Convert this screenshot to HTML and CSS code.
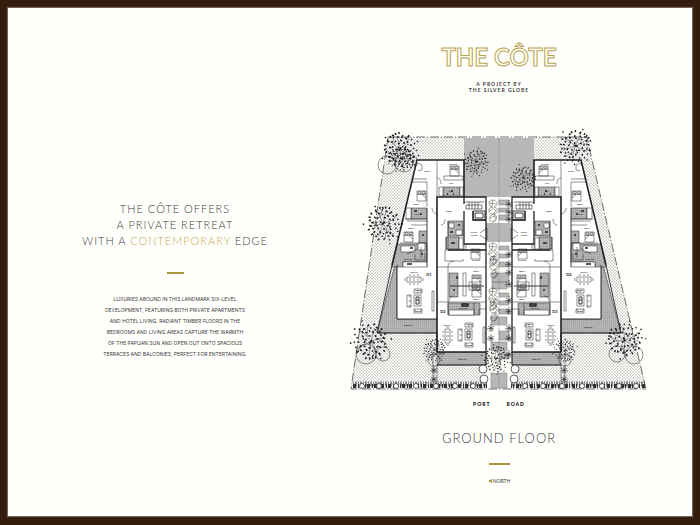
FILE: index.html
```html
<!DOCTYPE html>
<html lang="en">
<head>
<meta charset="utf-8">
<meta name="viewport" content="width=device-width, initial-scale=1">
<title>The Côte – Ground Floor</title>
<link rel="stylesheet" href="styles.css">
</head>
<body>
<main class="spread">
  <section class="intro">
    <h2 class="headline">The Côte offers<br>a private retreat<br>with a <span class="accent">contemporary</span> edge</h2>
    <div class="rule rule-small"></div>
    <p class="copy">Luxuries abound in this landmark six-level<br>development, featuring both private apartments<br>and hotel living. Radiant timber floors in the<br>bedrooms and living areas capture the warmth<br>of the Papuan sun and open out onto spacious<br>terraces and balconies, perfect for entertaining.</p>
  </section>
  <section class="floor">
    <h1 class="logo">THE CÔTE</h1>
    <p class="byline">A project by<br>the Silver Globe</p>
    <svg class="plan" viewBox="342 128 314 264" role="img" aria-label="Ground floor plan">
      <defs>
        <pattern id="grass" width="3" height="3" patternUnits="userSpaceOnUse"><path d="M0 0L3 3M3 0L0 3" stroke="#999" stroke-width=".35"/></pattern>
        <pattern id="deck" width="2" height="2" patternUnits="userSpaceOnUse"><rect width="2" height="2" fill="#c6c6c6"/><path d="M0 1H2" stroke="#999" stroke-width=".7"/></pattern>
        <pattern id="tile" width="2" height="2" patternUnits="userSpaceOnUse"><rect width="2" height="2" fill="#bbb"/><path d="M0 .5H2M.5 0V2" stroke="#999" stroke-width=".4"/></pattern>
        <g id="bed"><path d="M0 0H9V10H0ZM0 3.5H9M1 .8H4V2.6H1ZM5 .8H8V2.6H5ZM5 3.5L9 7"/></g>
        <g id="lounge">
          <path d="M7 0H15V4H7ZM8 1.5H14V4M11 1.5V4M0 6H4V18H0ZM1.500 7H4M1.500 12H4M1.500 17H4M7 6H14V17H7ZM7 20H15V24H7ZM8 20V22.500H14V20"/>
          <path d="M9 8H12V15H9ZM9 11H12" stroke-width=".9"/>
        </g>
        <g id="dining"><path d="M2 3H16V8H2ZM0 4V7M18 4V7M4 1H6M8 1H10M12 1H14M4 10H6M8 10H10M12 10H14M5 4V7M9 4V7M13 4V7"/></g>
        <g id="vine" stroke-width=".4"><path d="M5 0C0 0 0 5 4 7C-1 8 0 14 5 14C1 16 0 22 5 22C9 21 10 16 6 14C11 13 10 8 6 7C11 5 9 0 5 0M5 0L4 7L8 11L5 14L8 18L5 22M1 3L8 4M1 11L5 9M2 18L7 16"/></g>
        <g id="shrub"><path d="M0 0L-3 -2M0 0L3 -2M0 0L-4 1M0 0L3 1M0 0L-2 3M0 0L2 3M0 0V-4M0 0V4"/></g>
        <g id="leaves"><path d="M-16 -5l2 1M-14 3l1 -2M-13 -10l2 2M-12 7l2 0M-11 -3l2 1M-11 12l1 -2M-10 -14l1 2M-9 2l-2 2M-9 -8l2 0M-8 8l2 1M-7 -12l1 -1M-7 -4l-1 2M-6 4l2 0M-6 15l1 -2M-5 -17l1 2M-5 -9l1 1M-4 -1l2 1M-4 10l-1 2M-3 -13l2 0M-3 5l1 2M-2 -6l2 -1M-2 14l2 0M-1 -18l0 2M-1 1l1 -2M0 8l2 1M0 -10l2 1M1 -3l-1 2M2 4l2 0M2 17l1 -2M3 -15l-1 2M3 -7l2 0M4 11l1 1M4 0l2 -1M5 -12l2 1M6 -4l-1 2M6 6l2 0M7 -9l1 2M7 14l1 -2M8 1l2 1M9 -15l-1 2M9 9l2 -1M10 -5l2 0M10 4l1 2M11 -10l1 -1M12 12l1 -1M13 -2l1 1M13 6l2 1M14 -7l1 1M16 0l1 1M-14 -1l-2 1M-8 -15l2 1M-7 1l1 1M-10 6l0 2M1 -13l1 1M7 -1l1 1M5 8l-1 1M-1 11l1 1M-17 8l-1 1M17 -8l1 -1M-15 -13l1 1M14 15l1 0M18 5l1 1"/></g>
        <g id="tree">
          <path d="M0 0L-9 -8L-13 -8M0 0L8 -9V-14M0 0L-10 7M0 0L11 6L14 4M0 0L1 13M0 0L-3 -14M-5 -4L-7 -12M5 3L8 12M-5 4L-13 3" stroke-width=".4"/>
          <use href="#leaves" stroke-width="1.500"/>
        </g>
        <g id="half">
          <path d="M437 365H486V389H437Z" fill="url(#grass)" stroke="none"/>
          <path d="M397 265V319H437V333H377L395 265Z" fill="url(#tile)"/>
          <path d="M437 352H486V365H437Z" fill="url(#tile)"/>
          <path d="M417 160H464V197H486V352H437V319H397V265H392Z" fill="#fff" stroke="none"/>
          <g fill="url(#tile)">
            <path d="M443 187H460V196H443ZM411 208H427V219H411ZM419 231H427V243H419ZM448 221H463V236H448ZM446 237H459V249H446ZM449 273H458V297H449ZM448 303H480V315H448ZM397 244H427V262H403V267H392Z"/>
          </g>
          <g fill="#fff">
            <path d="M403 262H427V267H403ZM401 246H415V252H401ZM418 243H425V250H418ZM406 208H411V219H406ZM439 187H443V196H439ZM460 187H463V196H460ZM449 310H474V315H449ZM459 238H463V249H459ZM449 223H454V228H449ZM456 230H462V235H456Z"/>
          </g>
          <path d="M437 160V197M444 178V176H463V180H444ZM412 182H427V207M412 179H427M405 219H427V221H407M427 221V231M400 243H427V267M411 225H427M427 208V262M464 244V250H445V261H463V259M437 267H486M448 267V302M463 273H466V296H463ZM437 302H486M448 302V315M448 221V250M479 315V309H486M474 303V315M446 237V250M466 250V244M432 291H434V311H432ZM483 327H485V343H483ZM421 247V258M407 254L417 249M415 254V260H425V253"/>
          <path d="M415 167L418 163L422 165V170L418 171M437 178C440 178 441 181 441 184M432 208C432 212 435 214 438 214M441 225C444 225 445 222 445 219M448 267C448 263 451 261 454 261M449 302C449 297 451 296 454 296M480 233L487 228V240L480 235"/>
          <path d="M464 202H484M466 205H482V209H466ZM469 202V209M472 202V209M475 202V209M478 202V209" stroke-width=".6"/>
          <path d="M473 211H485V220H473ZM475 213H483V218H475ZM450 286H484" stroke-width=".9"/>
          <path d="M451 191h2M447 194h1M453 194h1M414 211h3M420 214h2M422 235h2M450 232h3M458 225h2M451 243h4M407 264h5M410 248h3M421 254h2M457 276v3M454 289v2M462 304h6v2h-6z" stroke-width="1.400"/>
          <use href="#bed" x="450" y="166"/><use href="#bed" x="417" y="191"/><use href="#bed" x="404" y="232"/>
          <use href="#bed" x="471" y="249"/><use href="#bed" x="472" y="275"/><use href="#bed" x="472" y="287"/>
          <path d="M469 282H480V290H469ZM472 284H477V288H472Z"/>
          <use href="#dining" x="405" y="274"/><use href="#lounge" x="407" y="289"/>
          <use href="#dining" transform="translate(453 327) rotate(90)"/><use href="#lounge" x="458" y="323"/>
          <path d="M437 352V197H464V160H417L392 265" fill="none" stroke-width="1.600"/>
          <path d="M464 197H486V352H437M464 197V204M464 211V244H486M473 211V220H486M448 250H486" fill="none" stroke-width="1.300"/>
          <path d="M397 265V319H437M392 265L377 333H437V352M437 365H486V352" fill="none" stroke-width=".9"/>
          <path d="M437 365V389M433 352V386" fill="none"/>
          <path d="M353 384H487" stroke-width="5" stroke-dasharray="1 1 2 1" stroke="#888"/>
          <path d="M353 386H487" stroke-width="4" stroke-dasharray="3 2 1 1" stroke="#333"/>
          <g fill="#fff" stroke-width=".7"><circle cx="362" cy="386" r="2.500"/><circle cx="379" cy="386" r="2.500"/><circle cx="396" cy="386" r="2.500"/><circle cx="416" cy="386" r="2.500"/><circle cx="436" cy="386" r="2.500"/><circle cx="455" cy="386" r="2.500"/><circle cx="473" cy="386" r="2.500"/><circle cx="483" cy="369" r="4"/><circle cx="484" cy="379" r="4"/></g>
          <g stroke-width=".6"><use href="#shrub" x="434" y="370"/><use href="#shrub" x="434" y="379"/></g>
        </g>
      </defs>

      <g class="ink">
        <path d="M388 137H464V197H437V389H351ZM534 137H587L592 160L646 389H561V197H534Z" fill="url(#grass)" stroke="none"/>
        <path d="M464 138H534V197H464ZM486 223H512V242H486Z" fill="url(#deck)" stroke="none"/>
        <use href="#half"/>
        <use href="#half" transform="translate(998 0) scale(-1 1)"/>

        <g class="paving" fill="url(#deck)">
          <path d="M499 200H509V205H499ZM499 208H509V212H499ZM499 215H509V220H499ZM499 246H509V250H499ZM499 254H509V258H499ZM499 262H509V267H499ZM492 273H509V282H492ZM492 282H507V289H492ZM499 293H509V297H499ZM499 301H509V305H499ZM499 309H509V314H499ZM491 317H507V325H491ZM499 331H509V340H499ZM491 342H507V351H491ZM499 353H509V359H499ZM491 373H507V388H491Z"/>
          <path d="M499 138V389" fill="none" stroke-dasharray="7 1 1 1"/>
        </g>
        <use href="#vine" x="488" y="200"/><use href="#vine" x="488" y="243"/><use href="#vine" x="489" y="256"/><use href="#vine" x="488" y="288"/><use href="#vine" x="489" y="299"/>
        <g stroke-width=".6">
          <use href="#shrub" x="509" y="204"/><use href="#shrub" x="509" y="212"/><use href="#shrub" x="509" y="219"/>
          <use href="#shrub" x="509" y="254"/><use href="#shrub" x="509" y="264"/><use href="#shrub" x="509" y="272"/><use href="#shrub" x="509" y="284"/>
          <use href="#shrub" x="509" y="300"/><use href="#shrub" x="509" y="311"/><use href="#shrub" x="509" y="328"/><use href="#shrub" x="509" y="338"/>
          <use href="#shrub" x="491" y="328"/><use href="#shrub" x="491" y="338"/><use href="#shrub" x="509" y="354"/>
        </g>

        <path class="boundary" d="M388 137H587L592 160L646 389M388 137L351 389H646"/>
        <g fill="none" stroke-width=".5">
          <circle cx="387" cy="165" r="9"/><circle cx="404" cy="163" r="9"/><circle cx="366" cy="354" r="10"/><circle cx="383" cy="354" r="7"/><circle cx="617" cy="354" r="8"/><circle cx="634" cy="355" r="9"/><circle cx="434" cy="360" r="6"/><circle cx="565" cy="360" r="6"/>
        </g>
        <use href="#tree" x="400" y="150"/>
        <use href="#tree" transform="translate(402 158) rotate(140) scale(.75)"/>
        <use href="#tree" transform="translate(383 224) rotate(25)"/>
        <use href="#tree" transform="translate(476 162) rotate(60) scale(.72)"/>
        <use href="#tree" transform="translate(523 178) rotate(100) scale(.72)"/>
        <use href="#tree" transform="translate(575 146) rotate(75) scale(.95)"/>
        <use href="#tree" transform="translate(371 341) rotate(200) scale(1.050)"/>
        <use href="#tree" transform="translate(625 340) rotate(310)"/>
        <use href="#tree" transform="translate(434 350) rotate(80) scale(.65)"/>
        <use href="#tree" transform="translate(565 350) rotate(190) scale(.65)"/>
        <use href="#tree" transform="translate(496 359) rotate(40) scale(.75)"/>
      </g>

      <g class="labels">
        <text x="427" y="172">STUDY</text><text x="453" y="165">MASTER</text><text x="451" y="184">WIR</text><text x="451" y="192">ENS</text>
        <text x="416" y="205">BED 3</text><text x="418" y="215">BATH</text><text x="411" y="229">BED 2</text><text x="449" y="212">LOBBY</text>
        <text x="474" y="233">ENTRY</text><text x="474" y="236">FOYER</text><text x="476" y="261">MASTER</text><text x="476" y="272">BED 2</text><text x="476" y="300">BED 3</text>
        <text x="463" y="309">KITCHEN</text><text x="408" y="260">KITCHEN</text><text x="408" y="326">TERRACE</text><text x="462" y="360">TERRACE</text><text x="414" y="273">DINING</text><text x="447" y="326">DINING</text>
        <text x="571" y="172">STUDY</text><text x="545" y="165">MASTER</text><text x="547" y="184">WIR</text><text x="547" y="192">ENS</text>
        <text x="580" y="205">BED 3</text><text x="580" y="215">BATH</text><text x="587" y="229">BED 2</text><text x="549" y="212">LOBBY</text>
        <text x="524" y="233">ENTRY</text><text x="524" y="236">FOYER</text><text x="522" y="261">MASTER</text><text x="522" y="272">BED 2</text><text x="522" y="300">BED 3</text>
        <text x="535" y="309">KITCHEN</text><text x="590" y="260">KITCHEN</text><text x="588" y="328">TERRACE</text><text x="536" y="360">TERRACE</text><text x="584" y="273">DINING</text><text x="551" y="326">DINING</text>
        <g class="unit"><text x="429" y="276">D1</text><text x="443" y="313">D2</text><text x="555" y="313">D3</text><text x="569" y="276">D4</text></g>
      </g>
    </svg>
    <p class="street"><span>Port</span><span>Road</span></p>
    <h2 class="level">Ground Floor</h2>
    <div class="rule rule-large"></div>
    <p class="north"><svg class="arrow" viewBox="0 0 4 4" aria-hidden="true"><path d="M0 2L4 0V4Z"/></svg>North</p>
  </section>
</main>
</body>
</html>
```
FILE: styles.css
```css
* {
  box-sizing: border-box;
}

body {
  margin: 0;
  padding: 8px 8px 9px;
  min-height: 100vh;
  display: flex;
  background: #341d0d;
  color: #3c3c3c;
  font-family: Lato, "Liberation Sans", sans-serif;
}

h1, h2, p {
  margin: 0;
  font-weight: 300;
  text-transform: uppercase;
}

.spread {
  flex: 1;
  display: grid;
  grid-template-columns: 334fr 314fr;
  padding-right: 36px;
  background: #fffffc;
  box-shadow: 0 0 1px 1px #71645a;
}

.intro,
.floor {
  display: flex;
  flex-direction: column;
  align-items: center;
  text-align: center;
}

.intro {
  padding-top: 193px;
}

.headline {
  font-size: 11px;
  line-height: 16px;
  letter-spacing: 1px;
}

.accent {
  color: #c2aa55;
}

.rule {
  height: 2px;
  background: #ad9440;
}

.rule-small {
  width: 17px;
  margin-top: 23px;
}

.copy {
  margin-top: 20px;
  font-family: Inter, Lato, sans-serif;
  font-size: 5px;
  font-weight: 400;
  line-height: 11px;
}

.floor {
  padding-top: 32px;
}

.logo {
  font-size: 24px;
  font-weight: 700;
  line-height: 34px;
  color: transparent;
  -webkit-text-stroke: 1px #b8a44d;
}

.byline {
  margin-top: 7px;
  font-size: 5px;
  font-weight: 700;
  line-height: 6px;
  letter-spacing: 1px;
}

.plan {
  display: block;
  width: 100%;
  height: auto;
  margin-top: 35px;
}

.ink {
  fill: none;
  stroke: #222;
  stroke-width: .5px;
}

.paving {
  stroke: #777;
}

.boundary {
  stroke: #333;
  stroke-width: .7px;
  stroke-dasharray: 9 2 1 2;
}

.labels {
  font-size: 2px;
  font-weight: 700;
  fill: #222;
  text-anchor: middle;
}

.unit {
  font-size: 4px;
}

.street {
  display: flex;
  gap: 16px;
  margin-top: 9px;
  color: #111;
  font-size: 5px;
  font-weight: 900;
  line-height: 6px;
  letter-spacing: 1px;
}

.level {
  margin-top: 22px;
  font-size: 13px;
  line-height: 18px;
  letter-spacing: 1px;
}

.rule-large {
  width: 21px;
  margin-top: 16px;
}

.north {
  display: flex;
  align-items: center;
  gap: 1px;
  margin-top: 13px;
  font-size: 5px;
  font-weight: 400;
  line-height: 6px;
}

.arrow {
  width: 4px;
  height: 4px;
  fill: #ad9440;
}
```
